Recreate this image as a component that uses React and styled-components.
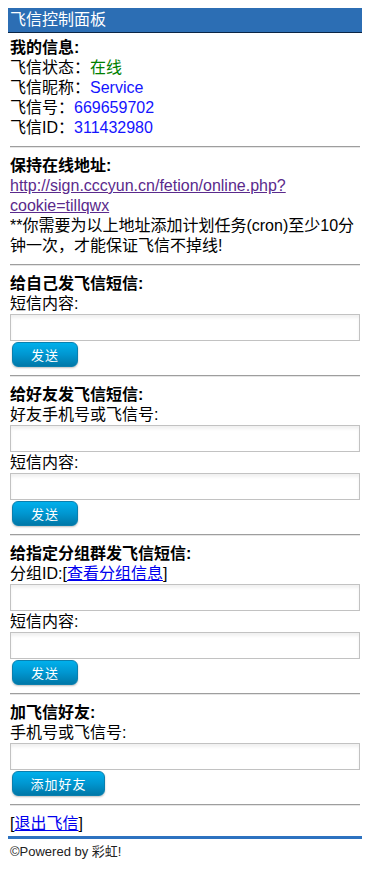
import React from "react";
import styled, { createGlobalStyle } from "styled-components";

const GlobalStyle = createGlobalStyle`
  body {
    margin: 8px;
    background: #fff;
    color: #000;
    font-family: "Liberation Sans", "Noto Sans CJK SC", sans-serif;
    font-size: 16px;
    line-height: 20px;
  }
`;

const Header = styled.div`
  background: #2c6eb4;
  color: #fff;
  height: 24px;
  line-height: 24px;
  padding-left: 2px;
  border-bottom: 1px solid #0b2545;
`;

const Content = styled.div`
  padding: 5px 2px 0 2px;
`;

const Title = styled.div`
  font-weight: bold;
`;

const Line = styled.div``;

const Value = styled.span`
  color: ${(p) => (p.$green ? "#008000" : "#1414ff")};
`;

const Link = styled.a`
  color: ${(p) => (p.$visited ? "#5a2a8c" : "#0000ee")};
  text-decoration: underline;
`;

const Divider = styled.div`
  height: 0;
  border-top: 1px solid #9e9e9e;
  border-bottom: 1px solid #e6e6e6;
  margin: 8px 0;
`;

const Input = styled.input`
  display: block;
  box-sizing: border-box;
  width: 100%;
  height: 27px;
  margin: 0 0 1px 0;
  border: 1px solid #c2c2c2;
  box-shadow: inset 0 3px 3px rgba(0, 0, 0, 0.06);
  background: #fff;
  outline: none;
`;

const Button = styled.button`
  display: block;
  box-sizing: border-box;
  width: ${(p) => (p.$wide ? "93px" : "66px")};
  height: 25px;
  margin: 0 0 0 2px;
  padding: 0;
  border: 1px solid #0a7fae;
  border-radius: 6px;
  background: linear-gradient(to bottom, #00b0ec 0%, #0096d0 50%, #0078a8 100%);
  box-shadow: 0 1px 2px rgba(0, 0, 0, 0.25);
  color: #fff;
  font-family: "Noto Sans CJK SC", sans-serif;
  font-size: 13px;
  letter-spacing: 1px;
  cursor: pointer;
`;

const Footer = styled.div`
  border-top: 3px solid #2d72c0;
  margin-top: 2px;
  padding: 5px 2px 0 2px;
  font-size: 13px;
  line-height: 16px;
  color: #222;
`;

const Field = ({ label, children }) => (
  <>
    <Line>{label}</Line>
    {children || <Input />}
  </>
);

export default function App() {
  return (
    <>
      <GlobalStyle />
      <Header>飞信控制面板</Header>
      <Content>
        <Title>我的信息:</Title>
        <Line>
          飞信状态：<Value $green>在线</Value>
        </Line>
        <Line>
          飞信昵称：<Value>Service</Value>
        </Line>
        <Line>
          飞信号：<Value>669659702</Value>
        </Line>
        <Line>
          飞信ID：<Value>311432980</Value>
        </Line>
        <Divider />

        <Title>保持在线地址:</Title>
        <Line>
          <Link $visited href="#">
            http://sign.cccyun.cn/fetion/online.php?
            <wbr />
            cookie=tillqwx
          </Link>
        </Line>
        <Line>**你需要为以上地址添加计划任务(cron)至少10分钟一次，才能保证飞信不掉线!</Line>
        <Divider />

        <Title>给自己发飞信短信:</Title>
        <Field label="短信内容:" />
        <Button>发送</Button>
        <Divider />

        <Title>给好友发飞信短信:</Title>
        <Field label="好友手机号或飞信号:" />
        <Field label="短信内容:" />
        <Button>发送</Button>
        <Divider />

        <Title>给指定分组群发飞信短信:</Title>
        <Field
          label={
            <>
              分组ID:[<Link href="#">查看分组信息</Link>]
            </>
          }
        />
        <Field label="短信内容:" />
        <Button>发送</Button>
        <Divider />

        <Title>加飞信好友:</Title>
        <Field label="手机号或飞信号:" />
        <Button $wide>添加好友</Button>
        <Divider />

        <Line>
          [<Link href="#">退出飞信</Link>]
        </Line>
      </Content>
      <Footer>©Powered by 彩虹!</Footer>
    </>
  );
}
